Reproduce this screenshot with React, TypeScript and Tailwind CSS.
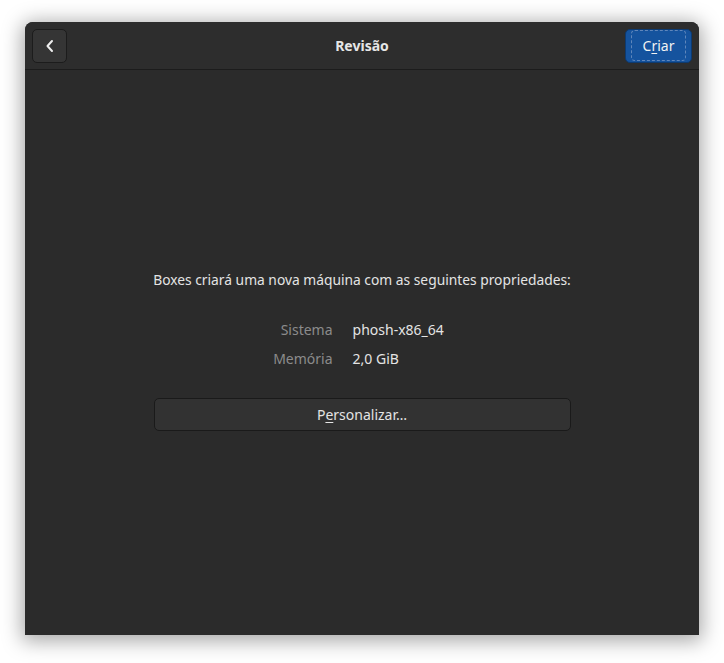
import React from "react";

export default function App() {
  return (
    <div className="w-[724px] h-[663px] bg-white relative overflow-hidden" style={{ fontFamily: '"Noto Sans", "DejaVu Sans", sans-serif' }}>
      <div className="absolute left-[25px] top-[22px] w-[674px] h-[613px] rounded-t-[8px] bg-[#2b2b2b] flex flex-col shadow-[0_3px_20px_3px_rgba(0,0,0,0.35)] overflow-hidden">
        <div className="h-[48px] shrink-0 bg-[#2d2d2d] border-b border-[#1c1c1c] flex items-center justify-between px-[7px] relative">
          <button className="w-[35px] h-[34px] rounded-[5px] bg-[#353535] border border-[#1c1c1c] flex items-center justify-center text-[#e8e8e8]">
            <svg width="16" height="16" viewBox="0 0 16 16"><path d="M10 3 L5.5 8 L10 13" fill="none" stroke="#eeeeee" strokeWidth="2" strokeLinecap="round" strokeLinejoin="round" /></svg>
          </button>
          <div className="absolute left-0 right-0 text-center text-[14px] font-bold text-[#e6e6e6] pointer-events-none">Revisão</div>
          <button className="w-[67px] h-[34px] rounded-[5px] bg-[#15539e] border border-[#0d3a70] text-[#f2f2f2] text-[14px] flex items-center justify-center">
            <span className="rounded-[3px] outline outline-1 outline-dashed outline-[#5f86bb] px-[11px] py-[4px]">C<span className="underline underline-offset-2">r</span>iar</span>
          </button>
        </div>
        <div className="flex-1 flex flex-col items-center justify-center pb-[4px]">
          <div className="text-[13.8px] text-[#e4e4e4]">Boxes criará uma nova máquina com as seguintes propriedades:</div>
          <div className="grid grid-cols-[auto_auto] gap-x-[20px] gap-y-[8px] mt-[28px] text-[14px] ml-[-7px]">
            <div className="text-right text-[#8b8b8b]">Sistema</div>
            <div className="text-[#e4e4e4]">phosh-x86_64</div>
            <div className="text-right text-[#8b8b8b]">Memória</div>
            <div className="text-[#e4e4e4]">2,0 GiB</div>
          </div>
          <button className="mt-[29px] w-[417px] h-[33px] rounded-[5px] bg-[#323232] border border-[#1a1a1a] text-[14px] text-[#e4e4e4]">
            P<span className="underline underline-offset-2">e</span>rsonalizar…
          </button>
        </div>
      </div>
    </div>
  );
}
